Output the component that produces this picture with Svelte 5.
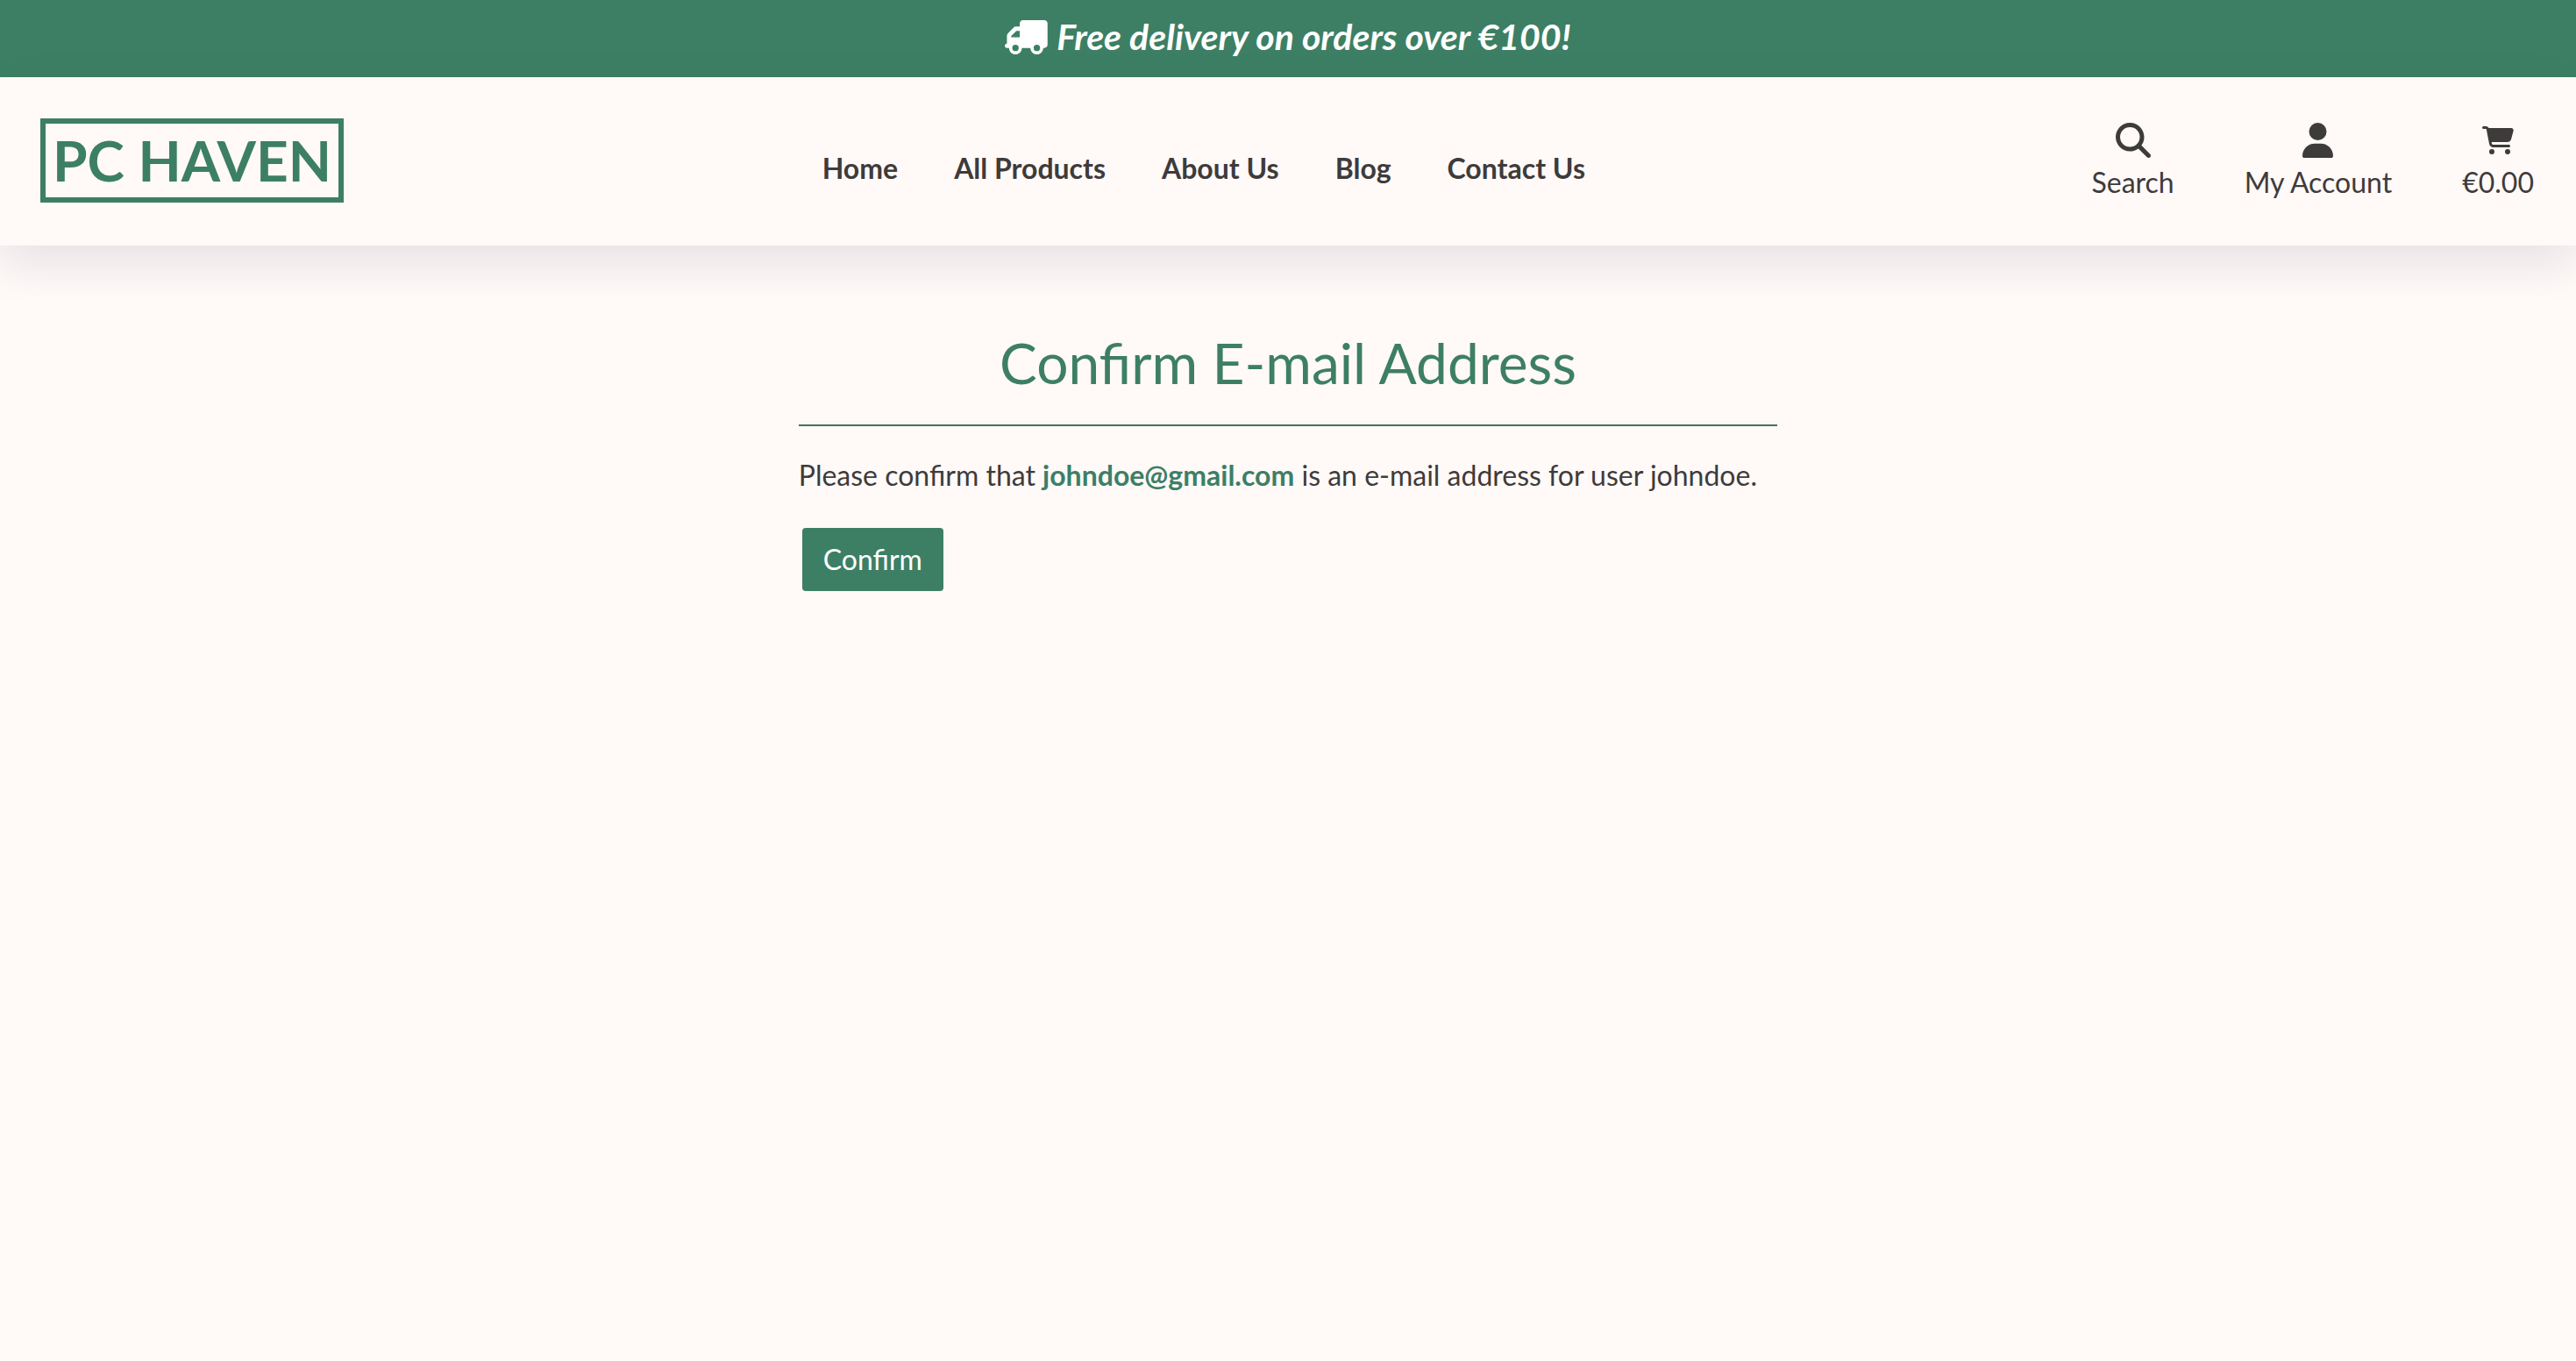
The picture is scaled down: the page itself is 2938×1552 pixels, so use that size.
<script>
  const links = ['Home', 'All Products', 'About Us', 'Blog', 'Contact Us'];
</script>

<div class="banner">
  <svg class="truck" viewBox="0 0 640 512" aria-hidden="true">
    <path transform="matrix(-1 0 0 1 640 0)" d="M48 0C21.500 0 0 21.500 0 48V368c0 26.500 21.500 48 48 48H64c0 53 43 96 96 96s96-43 96-96H384c0 53 43 96 96 96s96-43 96-96h32c17.700 0 32-14.300 32-32s-14.300-32-32-32V288 256 237.300c0-17-6.700-33.300-18.700-45.300L512 114.700c-12-12-28.300-18.700-45.300-18.700H416V48c0-26.500-21.500-48-48-48H48zM416 160h50.700L544 237.300V256H416V160zM112 416a48 48 0 1 1 96 0 48 48 0 1 1-96 0zm368-48a48 48 0 1 1 0 96 48 48 0 1 1 0-96z" />
  </svg>
  <strong>Free delivery on orders over €100!</strong>
</div>

<header>
  <a class="logo" href="/">PC HAVEN</a>
  <nav aria-label="Main">
    {#each links as link}
      <a href="/">{link}</a>
    {/each}
  </nav>
  <div class="tools">
    <button type="button">
      <svg class="icon" viewBox="0 0 512 512" aria-hidden="true">
        <path d="M416 208c0 45.900-14.900 88.300-40 122.700L502.600 457.400c12.500 12.500 12.500 32.800 0 45.300s-32.800 12.500-45.300 0L330.700 376c-34.400 25.200-76.800 40-122.700 40C93.100 416 0 322.900 0 208S93.100 0 208 0S416 93.100 416 208zM208 352a144 144 0 1 0 0-288 144 144 0 1 0 0 288z" />
      </svg>
      Search
    </button>
    <button type="button">
      <svg class="icon" viewBox="0 0 448 512" aria-hidden="true">
        <path d="M224 256A128 128 0 1 0 224 0a128 128 0 1 0 0 256zm-45.700 48C79.800 304 0 383.800 0 482.300C0 498.700 13.300 512 29.700 512H418.300c16.400 0 29.700-13.300 29.700-29.700C448 383.800 368.200 304 269.700 304H178.300z" />
      </svg>
      My Account
    </button>
    <a href="/">
      <svg class="icon cart" viewBox="0 0 576 512" aria-hidden="true">
        <path d="M0 24C0 10.700 10.700 0 24 0H69.500c22 0 41.500 12.800 50.600 32h411c26.300 0 45.500 25 38.600 50.400l-41 152.300c-8.500 31.400-37 53.300-69.500 53.300H170.700l5.400 28.500c2.200 11.300 12.100 19.500 23.600 19.500H488c13.300 0 24 10.700 24 24s-10.700 24-24 24H199.700c-34.600 0-64.300-24.600-70.700-58.500L77.400 54.500c-.7-3.800-4-6.500-7.900-6.500H24C10.700 48 0 37.300 0 24zM128 464a48 48 0 1 1 96 0 48 48 0 1 1-96 0zm336-48a48 48 0 1 1 0 96 48 48 0 1 1 0-96z" />
      </svg>
      €0.00
    </a>
  </div>
</header>

<main>
  <h1>Confirm E-mail Address</h1>
  <hr />
  <p>Please confirm that <a href="mailto:johndoe@gmail.com">johndoe@gmail.com</a> is an e-mail address for user johndoe.</p>
  <form onsubmit={(e) => e.preventDefault()}>
    <button type="submit">Confirm</button>
  </form>
</main>

<style>
  :global(body) {
    margin: 0;
    background: #fff9f8;
    color: #3e3b3b;
    font-family: Lato, 'Liberation Sans', sans-serif;
    font-size: 32px;
    line-height: 48px;
  }

  a {
    color: inherit;
    text-decoration: none;
  }

  svg {
    display: block;
    fill: currentColor;
  }

  .banner {
    display: flex;
    align-items: center;
    justify-content: center;
    gap: 10px;
    padding: 18px 24px 22px;
    background: #3d7f65;
    color: #fff;
    font-size: 41px;
    font-style: italic;
  }

  .truck {
    height: 39px;
  }

  header {
    position: relative;
    display: flex;
    align-items: center;
    justify-content: space-between;
    padding: 46px 48px 48px 46px;
    box-shadow: 0 20px 50px rgba(10, 20, 60, 0.1);
  }

  .logo {
    padding: 0 8px;
    border: 6px solid #3d7f65;
    color: #3d7f65;
    font-size: 64px;
    font-weight: 700;
    line-height: 84px;
  }

  nav {
    display: flex;
    gap: 64px;
    padding-top: 18px;
    font-weight: 700;
  }

  .tools {
    display: flex;
    gap: 80px;
    padding: 6px 0 0 32px;
  }

  .tools > * {
    display: flex;
    flex-direction: column;
    align-items: center;
    gap: 4px;
  }

  .icon {
    height: 40px;
  }

  .cart {
    box-sizing: border-box;
    padding: 4px 0;
  }

  button {
    padding: 0;
    border: 0;
    background: none;
    color: inherit;
    font: inherit;
    cursor: pointer;
  }

  main {
    width: 38%;
    margin: 0 auto;
    padding-top: 96px;
  }

  h1 {
    margin: 0;
    color: #3d7f65;
    font-size: 64px;
    font-weight: 400;
    line-height: 76px;
    text-align: center;
  }

  hr {
    height: 2px;
    margin: 32px 0;
    border: 0;
    background: #3d7561;
  }

  p {
    margin: 0 0 36px;
  }

  p a {
    color: #3d7f65;
    font-weight: 700;
  }

  form button {
    margin: 0 4px;
    padding: 12px 24px;
    border-radius: 4px;
    background: #3d7f65;
    color: #fff;
  }
</style>
